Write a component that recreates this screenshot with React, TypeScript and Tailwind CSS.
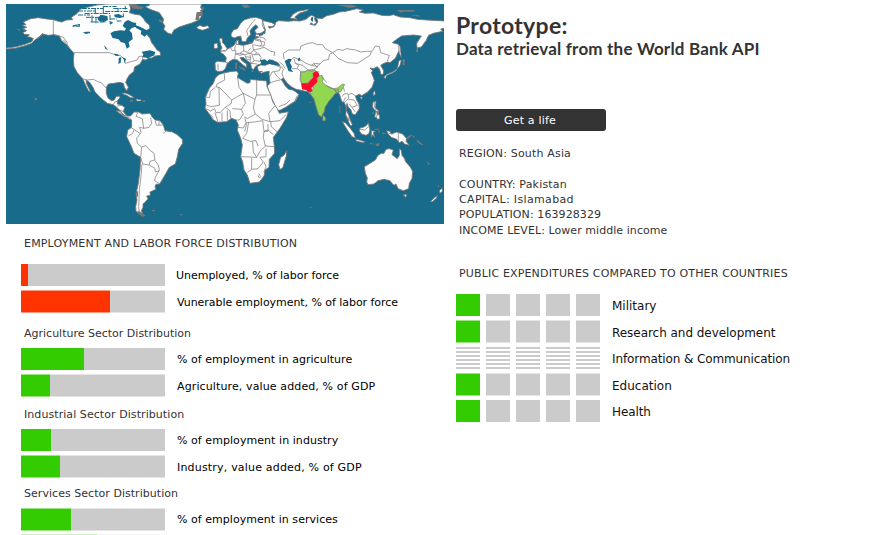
import React from "react";

const LAND = { fill: "#fdfdfd", stroke: "#777", strokeWidth: 2.6, strokeLinejoin: "round" as const };
const LINE = { fill: "none", stroke: "#7c7c7c", strokeWidth: 2.2, strokeLinejoin: "round" as const };
const SEA = "#186b8b";

function NorthAmerica() {
  return (
    <g transform="scale(.33333)">
      <path {...LAND} d="M18 144L45 141 75 133 95 125 100 116 92 112 82 110 88 104 74 103 68 98 80 92 68 86 80 82 66 76 78 74 70 66 92 56 115 53 140 57 160 59 175 64 185 66 200 60 218 59 214 52 232 40 240 28 262 22 290 15 320 12 388 12 392 25 388 38 405 43 420 45 430 55 437 66 448 75 450 85 438 92 440 102 450 115 455 128 463 138 471 150 480 155 482 166 465 168 455 174 445 174 438 180 428 178 420 192 404 201 401 215 388 225 381 237 377 247 385 262 380 272 373 262 370 250 358 247 342 250 325 252 319 262 319 280 324 294 335 302 343 300 348 290 358 288 360 294 352 302 352 312 365 316 374 322 370 335 380 347 395 352 408 347 414 354 402 360 388 358 368 342 355 326 340 314 322 310 300 292 285 276 278 260 268 246 258 240 260 252 272 276 266 274 257 256 248 236 232 218 222 200 220 180 222 160 210 146 200 134 185 122 178 108 160 104 145 106 128 102 114 113 100 124 95 130 75 137 45 145 18 147Z" />
      <path {...LINE} d="M160 59V103L178 108 190 112 202 128M222 158H328L345 164 360 166 372 176 376 190 396 184 412 180 416 170 426 168 428 178M248 236L262 240 280 238 292 244 304 248 318 264M340 314L344 306 352 304M352 318L364 316M360 330L370 335M190 120L202 132 204 142" />
      <path fill={SEA} d="M331 100L342 94 362 91 374 92 378 86 368 78 374 66 384 60 396 66 409 70 407 80 396 84 388 91 396 100 398 118 386 126 389 140 380 146 375 130 362 126 356 118 338 114ZM400 68H408V76L420 80 432 86 442 92 444 100 434 110 422 102 424 92 408 84ZM356 174L364 171 362 188 355 192 356 182ZM366 172L378 176 374 190 371 178ZM342 161L352 162 358 168 346 167ZM425 155L450 151 466 156 463 166 445 174 427 172 430 163Z" />
      <path fill={SEA} d="M218 76L240 72V76L218 81ZM228 80H240V76H232ZM248 98L258 95H270V99L258 102ZM312 136L318 142 324 150 316 146ZM292 56L302 44 322 48 324 60 312 66 298 64ZM328 62L340 68 330 74ZM342 44L356 42 372 50 360 54 345 52Z" />
      <path stroke={SEA} strokeWidth="3" fill="none" strokeDasharray="15 3 6 3" d="M234 33H288M246 25.5H310M310 19.5H350M340 25.5H383M254 40.5H330M316 34.5H384M234 45H270M258 52H298M272 66H318M330 57H350M350 63H364" />
      <path stroke={SEA} strokeWidth="3" fill="none" d="M310 18V42M354 24V36M276 46V66M288 54V70M330 45V60M370 40V52M376 18V28M286 25V40" />
      <path {...LAND} d="M450 12H605L602 22 607 30 598 42 604 50 597 60 576 69 556 75 538 81 522 90 515 103 503 99 491 88 495 78 488 68 491 58 478 38 450 28 435 20 448 16ZM590 82L600 76 609 80 624 77 628 84 607 91 599 88 594 87Z" />
      <path fill="#777" d="M387 12H408L416 18 432 20 424 28 398 26ZM590 36H608V48H598V60H586ZM478 58L488 60 486 68 476 64ZM48 88H60V94ZM104 294H111V300H104ZM428 301H436V306H428ZM391 299H399V305H390ZM120 108L128 98 130 102 114 118Z" />
      <path {...LAND} strokeWidth={2.2} d="M366 281L374 279 386 283 396 289 403 293 392 293 380 286ZM408 297L422 299 424 303 410 303Z" />
    </g>
  );
}

function SouthAmerica() {
  return (
    <g transform="translate(60 90) scale(.33333)">
      <path {...LAND} d="M168 62L180 64 190 76 202 78 212 78 222 66 236 66 246 72 270 70 276 80 285 90 300 92 310 105 315 122 335 125 350 133 367 148 368 160 356 178 352 200 346 222 328 232 318 250 306 270 299 282 288 283 285 290 288 298 270 306 271 316 260 318 264 326 256 336 249 342 249 352 244 362 248 370 238 372 228 364 227 350 231 330 228 312 235 280 240 240 242 202 222 190 212 165 200 140 203 120 215 112 215 90 206 82 194 80Z" />
      <path {...LINE} d="M234 66L228 79 247 86 251 115 267 112 275 100 272 84M286 92L289 106 310 105M297 93V106M251 115L239 112 243 128 230 145 232 160 245 171 258 167 268 179 282 190 285 212 295 225 298 240 286 262 284 272 300 282M245 171L242 202 248 222 268 225 270 214 284 210M246 222L243 260 238 300 236 350 238 368M268 225L285 235 286 246 298 242M213 113L223 119 217 131 205 138M223 119L240 130M310 130L320 122 332 126" />
      <path fill="#777" d="M232 362L243 366 257 377 248 380 234 372ZM276 360H285V364H277ZM357 372H366V378ZM228 304H234V320H229Z" />
    </g>
  );
}

function Eurasia() {
  return (
    <g transform="translate(200 0) scale(.33333)">
      <path {...LAND} d="M45 188L52 184 76 186 79 174 72 164 60 156 66 152 76 153 83 147 96 140 104 134 107 124 114 124 116 134 130 136 150 131 158 128 162 118 176 112 166 108 168 102 180 104 195 100 196 88 192 80 180 66 190 62 215 68 226 74 216 80 205 79 208 85 222 80 228 66 236 62 265 64 282 62 300 63 318 58 327 50 334 46 345 50 344 60 350 68 340 74 334 68 330 73 346 76 354 66 350 54 366 56 380 47 400 43 418 36 438 34 470 26 490 30 478 36 495 40 520 39 545 46 566 47 580 44 600 51 630 53 652 58 680 60 735 63 735 84 722 87 728 94 700 100 686 106 678 122 664 141 651 144 650 130 664 108 640 105 605 108 590 118 577 128 593 132 599 138 597 152 586 175 570 188 563 186 552 190 542 196 551 212 550 222 543 224 539 208 532 200 520 206 510 204 518 212 514 218 520 232 523 242 516 262 502 277 485 287 478 283 466 288 470 300 477 312 478 326 466 344 457 342 452 328 445 322 441 310 438 326 446 346 455 372 448 366 437 344 440 324 432 306 426 306 420 288 416 278 406 280 398 290 386 304 375 322 373 334 364 350 356 344 350 325 342 296 334 286 326 276 310 272 288 268 274 260 262 250 250 234 244 238 256 258 266 268 278 270 288 276 297 284 286 304 264 318 240 331 230 330 222 310 208 280 202 258 210 250 207 222 208 214 194 216 184 220 175 212 172 200 182 195 196 196 210 190 228 196 240 197 234 188 216 180 206 182 200 190 186 188 180 193 174 194 166 200 160 210 154 203 152 190 142 182 130 172 120 173 126 182 140 192 140 203 128 194 112 180 100 178 92 182 82 190 76 206 68 213 54 215 46 210Z" />
      <path {...LAND} d="M93 102L100 90 112 86 122 70 132 60 150 54 168 52 186 58 192 78 194 92 184 99 170 102 164 92 174 82 168 74 160 80 150 92 152 104 142 114 138 125 126 125 122 108 112 110 104 114 94 110Z" />
      <path {...LAND} d="M58 116L66 114 68 128 74 134 82 147 76 152 60 153 66 144 62 134ZM42 132L52 129 54 144 42 146ZM270 54L280 42 294 34 326 28 322 32 298 40 284 52 292 58ZM110 121H115V133H108Z" />
      <path {...LAND} d="M68 220L90 215 110 213 115 220 112 232 125 240 142 250 150 248 151 238 170 240 200 243 201 260 212 284 218 305 231 325 238 340 265 335 260 352 240 385 220 412 223 440 224 460 208 478 207 502 195 510 192 528 178 546 150 550 142 525 132 510 128 485 122 470 127 435 122 415 112 390 115 375 108 360 95 355 80 365 52 367 38 358 28 342 15 325 18 310 16 292 28 265 40 250 46 234 56 224Z" />
      <path {...LAND} d="M260 452L259 468 248 504 240 508 236 494 242 472 252 466Z" />
      <path {...LINE} d="M73 221L74 240 51 252 48 260 60 264 95 300 112 290 130 280 117 262 113 232M18 292H29L31 274 46 262M57 262L58 316 32 320 18 314M95 300L94 310 76 322 60 338 48 338 44 326 30 334M16 325L30 332M130 280L136 310 124 328 97 326M130 280L165 298 170 284V240M170 285H212M165 298L160 324 166 342 142 356 134 350M76 322L90 332 92 356M124 328L130 342 118 360 108 360M166 342L186 358 210 365 206 340 224 318M210 365L240 362 258 344M212 365L214 380 234 398M134 352L138 368 164 366 188 362 192 394 190 412 196 438M138 368L130 384 114 382M146 366L140 400 128 415 150 424 168 422 174 438M122 470L170 472 160 456 158 424M170 472L180 454 196 438 222 440M192 394L204 390 220 404M155 474V508L142 518M155 508L174 506 190 486 180 472M180 472L198 470 198 446M192 486L198 500 192 516M45 338L54 366M66 338V364M82 332V362M32 344L40 354M176 520L182 530 178 534 174 526M192 394H204V372M140 370L134 394" />
      <path {...LINE} d="M76 187L84 189M54 191L54 211M90 140L96 152 108 152 106 162 104 178M106 136L104 150M130 136L132 152 120 160 106 162M130 152L150 160 160 152 158 134M120 160L134 164 150 160 164 165 170 158 160 150M134 164L140 178 152 178 150 164M150 178L152 190 164 182 180 184 184 172 176 164 164 164M166 108V120L180 118 186 134 180 138 160 134M166 120L194 126 192 138 180 138M160 150L180 146 192 142 212 154 224 156 222 168M176 100L180 110M146 125L158 130M144 108L140 92 148 80 158 66 166 58M190 62L186 72 192 88M152 190L172 192M156 164L162 182M136 170L152 172M108 162L120 166 132 162M170 158L182 166M144 154L152 144M172 110L192 114 198 122" />
      <path {...LINE} d="M232 198L242 202 238 212 216 216 210 230M242 198L250 208 246 220 252 238M222 216L232 230 246 242M210 248L224 244 240 240M262 318L284 304 292 286M236 320L258 312 270 300M252 178L250 160 266 150 284 150 300 150 303 138 324 130 338 128 352 134 368 134 376 146 398 158 388 164 386 178 370 182 360 192 344 190 334 196 318 190 306 182 282 172 276 176M398 158L414 148 428 151 440 146 466 150 482 156 500 154 516 154 526 138 538 140 542 158 560 164 568 166 562 184M398 158L416 176 442 188 472 190 488 180 510 166 514 156M282 176L286 190 308 196 324 210 334 210 346 206 354 200 334 196M276 206L292 206 302 214 318 214 334 210M286 190L296 196 292 204M340 190L350 200 360 192M334 210L344 214 358 216M302 214L300 240 305 252 308 268M268 204L260 196M238 186L250 196 256 206" />
      <path fill="#91d750" stroke="#777" strokeWidth="2" d="M302 218L314 216 324 210 334 214 345 209 350 215 342 218 340 230 332 236 326 249 306 251 302 238ZM330 274L340 266 338 258 350 244 356 228 366 226 370 238 366 246 378 256 400 266 412 264 428 252 434 254 422 276 414 276 406 280 398 290 386 304 375 322 373 334 364 350 356 344 350 325 342 296 334 286ZM369 345L376 352V362H368Z" />
      <path {...LINE} d="M378 256L390 264 404 268M402 266L410 278 404 270 414 270M414 278L416 266M430 262L434 275M366 230L380 248" />
      <path fill="#fb0b2b" d="M304 250H324L332 240 340 232 338 220 348 214 356 218 358 226 350 236 352 246 342 256 334 264 338 274 326 277 318 270 306 268Z" />
      <path fill={SEA} d="M254 183L266 176 276 178 270 188 276 200 273 208 280 216 266 214 262 204ZM180 181L194 178 202 184 208 178 218 182 230 191 226 195 206 192 186 194ZM334 52L340 52 338 66 332 60ZM293 178L298 172 302 180 296 184ZM176 104L190 101 188 106 178 108Z" />
      <path {...LINE} d="M432 308L446 296 444 284 456 280 466 288M438 292L430 304M446 298L462 300 472 316 456 322 448 312M456 322L466 336M426 290L432 282 444 280" />
      <path {...LAND} strokeWidth={2} d="M597 182L604 180 600 196 588 212 576 220 560 226 556 236 552 232 558 224 578 216 592 206ZM596 138L600 138 604 172 598 160ZM520 278L524 272 526 282 520 288ZM480 291L488 292 484 298ZM520 306L528 304 526 324 536 332 534 356 524 350 528 334 518 322Z" />
      <path fill="#777" d="M410 14H456L472 20 450 24ZM0 30H8L4 40ZM0 22H14L8 32ZM590 30H642V35H612L602 38ZM124 14H142L152 22 132 24ZM632 46H658V50ZM608 196H614V178H608ZM650 144H654V156H648ZM116 199L138 208 134 212 118 204ZM156 210L164 216H154ZM176 213H188V217H176ZM106 188H111V206H106ZM322 306H334V309Z" />
    </g>
  );
}

function Oceania() {
  return (
    <g transform="translate(310 90) scale(.33333)">
      <path {...LAND} d="M163 230L180 220 196 210 204 196 214 190 222 190 228 178 238 176 250 180 246 194 262 206 268 196 268 176 274 182 276 196 284 206 286 214 300 230 308 244 306 266 298 280 296 296 280 302 264 296 258 282 252 286 246 280 240 272 222 268 204 272 192 282 174 284 170 276 172 264 166 250ZM280 314H291L287 322ZM362 334L372 324 382 317 380 324 366 336ZM388 302L396 294 397 304 390 310Z" />
      <path {...LAND} d="M97 95L106 98 120 114 132 130 136 144 126 140 112 120 106 110ZM136 148L152 151 164 155 162 158 140 154ZM150 114L160 112 170 106 175 98 178 112 180 120 176 132 168 136 154 132 148 122ZM184 122L196 124 190 128 194 142 188 134 184 142ZM230 122L240 124 244 132 260 126 278 132 290 146 288 154 298 166 284 162 276 154 268 158 260 148 244 142 234 132Z" />
      <path {...LINE} d="M265 128V158M150 118L164 120 176 110M236 130L250 132M108 84L114 92 118 80" />
      <path fill="#777" d="M180 158L196 163H178ZM200 160H210L206 168H196ZM194 116H204V119H194ZM204 112L210 126 206 130ZM216 128H226V132H216ZM288 144L302 134 304 138 294 148ZM302 132L314 140 312 144ZM318 148L330 156 340 164 336 166 324 158ZM348 212L360 222 356 225ZM384 282L388 292 384 290ZM88 48H91V68H88ZM186 70L192 62 190 74ZM198 62H206V78L200 72ZM0 350H4V354H0Z" />
      <path {...LAND} strokeWidth={2} d="M189 36L195 38 193 52 200 58 194 60 188 50ZM198 76L208 74 209 86 202 88ZM114 92L120 90 127 104 122 108Z" />
    </g>
  );
}

function WorldMap() {
  return (
    <svg className="block h-[220px] w-[438px]" viewBox="6 4 438 220">
      <rect x="6" y="4" width="438" height="220" fill={SEA} />
      <NorthAmerica />
      <Eurasia />
      <Oceania />
      <SouthAmerica />
    </svg>
  );
}

type BarProps = { label: string; fill: string; soft?: boolean; text: string };

function Bar({ label, fill, soft, text }: BarProps) {
  return (
    <div className="flex h-[23px] items-start">
      <div className={`relative w-36 bg-[#cbcbcb] ${soft ? "h-[23px]" : "h-[22px]"}`}>
        <div className={`h-full ${fill}`} />
        {soft && <div className="absolute inset-0 border-y border-white/50" />}
      </div>
      <span className={`whitespace-nowrap text-[11px] leading-[22px] text-black ${text}`}>{label}</span>
    </div>
  );
}

const subheading = "ml-[3px] whitespace-nowrap text-[11px] leading-4 text-[#333]";

function Squares({ kind }: { kind: "solid" | "soft" | "empty" }) {
  return (
    <div className="flex w-36 gap-1.5">
      {[0, 1, 2, 3, 4].map((i) =>
        kind === "empty" ? (
          <div key={i} className="flex h-[22px] w-6 flex-col gap-0.5">
            {[0, 1, 2, 3, 4, 5].map((s) => (
              <div key={s} className="h-0.5 bg-[#cbcbcb]" />
            ))}
          </div>
        ) : (
          <div key={i} className={`relative w-6 ${kind === "soft" ? "h-[23px]" : "h-[22px]"} ${i === 0 ? "bg-[#33cc00]" : "bg-[#cbcbcb]"}`}>
            {kind === "soft" && <div className="absolute inset-0 border-y border-white/50" />}
          </div>
        ),
      )}
    </div>
  );
}

type ExpenditureProps = { label: string; kind: "solid" | "soft" | "empty"; box: string; text?: string };

function Expenditure({ label, kind, box, text = "" }: ExpenditureProps) {
  return (
    <div className={`flex items-start ${box}`}>
      <Squares kind={kind} />
      <span className={`ml-3 whitespace-nowrap text-[12px] text-[#111] ${kind === "soft" ? "mt-0.5" : "mt-px"} leading-[22px] ${text}`}>{label}</span>
    </div>
  );
}

export default function App() {
  return (
    <div className="flex h-[535px] w-[870px] overflow-hidden bg-white font-['DejaVu_Sans',Verdana,sans-serif]">
      <div className="w-[450px] shrink-0 pl-1.5 pt-1">
        <WorldMap />
        <div className="flex flex-col pl-[15px] pt-3">
          <h2 className={`${subheading} tracking-[0.18px]`}>EMPLOYMENT AND LABOR FORCE DISTRIBUTION</h2>
          <div className="mt-3 flex flex-col gap-[3px]">
            <Bar label="Unemployed, % of labor force" fill="w-[7px] bg-[#ff3300]" text="ml-[11px] mt-px tracking-[-0.03px]" />
            <Bar label="Vunerable employment, % of labor force" fill="w-[89px] bg-[#ff3300]" soft text="ml-3 mt-0.5 tracking-[-0.05px]" />
          </div>
          <h3 className={`${subheading} mt-[13px]`}>Agriculture Sector Distribution</h3>
          <div className="mt-1.5 flex flex-col gap-[3px]">
            <Bar label="% of employment in agriculture" fill="w-[63px] bg-[#33cc00]" text="ml-3 mt-px tracking-[0.03px]" />
            <Bar label="Agriculture, value added, % of GDP" fill="w-[29px] bg-[#33cc00]" soft text="ml-3 mt-0.5 tracking-[0.12px]" />
          </div>
          <h3 className={`${subheading} mt-2.5 tracking-[0.07px]`}>Industrial Sector Distribution</h3>
          <div className="mt-1.5 flex flex-col gap-[3px]">
            <Bar label="% of employment in industry" fill="w-[30px] bg-[#33cc00]" text="ml-3 mt-px tracking-[0.06px]" />
            <Bar label="Industry, value added, % of GDP" fill="w-[39px] bg-[#33cc00]" soft text="ml-3 mt-0.5 tracking-[0.19px]" />
          </div>
          <h3 className={`${subheading} mt-2 tracking-[0.04px]`}>Services Sector Distribution</h3>
          <div className="mt-1.5 flex flex-col gap-[3px]">
            <Bar label="% of employment in services" fill="w-[50px] bg-[#33cc00]" soft text="ml-3 mt-px tracking-[0.04px]" />
            <div className="h-px w-36 bg-[#f4f4f4]">
              <div className="h-px w-[76px] bg-[#c9f2bd]" />
            </div>
          </div>
        </div>
      </div>
      <div className="flex flex-1 flex-col pl-1.5 pt-[11px]">
        <h1 className="whitespace-nowrap font-['Lato','Open_Sans',sans-serif] text-[23px] font-bold leading-7 tracking-[0.3px] text-[#333]">Prototype:</h1>
        <p className="mt-px whitespace-nowrap font-['Lato','Open_Sans',sans-serif] text-[17px] font-bold leading-[18px] tracking-[0.19px] text-[#333]">Data retrieval from the World Bank API</p>
        <button className="mt-[51px] h-[22px] w-[150px] rounded-[3px] bg-[#333] pr-0.5 pt-px text-[11px] leading-[21px] tracking-[0.18px] text-white">Get a life</button>
        <div className="ml-[3px] mt-[15px] whitespace-nowrap text-[11px] leading-4 text-[#333]">
          <p className="tracking-[0.17px]">REGION: South Asia</p>
          <p className="mt-[15px] tracking-[0.18px]">COUNTRY: Pakistan</p>
          <p className="-mt-px tracking-[0.34px]">CAPITAL: Islamabad</p>
          <p className="-mt-px tracking-[0.1px]">POPULATION: 163928329</p>
          <p className="tracking-[0.06px]">INCOME LEVEL: Lower middle income</p>
        </div>
        <h2 className="ml-[3px] mt-[27px] whitespace-nowrap text-[11px] leading-4 tracking-[0.16px] text-[#333]">PUBLIC EXPENDITURES COMPARED TO OTHER COUNTRIES</h2>
        <div className="mt-3 flex flex-col">
          <Expenditure label="Military" kind="solid" box="h-[26px]" />
          <Expenditure label="Research and development" kind="soft" box="h-[27px]" text="tracking-[-0.04px]" />
          <Expenditure label="Information & Communication" kind="empty" box="h-[26px]" text="tracking-[-0.11px]" />
          <Expenditure label="Education" kind="soft" box="h-[27px]" />
          <Expenditure label="Health" kind="solid" box="h-[22px]" text="tracking-[-0.1px]" />
        </div>
      </div>
    </div>
  );
}
